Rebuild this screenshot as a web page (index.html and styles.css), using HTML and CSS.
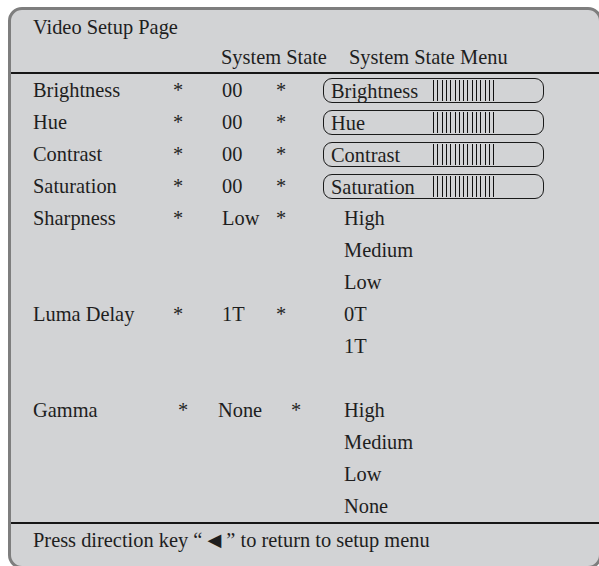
FILE: index.html
```html
<!DOCTYPE html>
<html lang="en">
<head>
    <meta charset="UTF-8">
    <meta name="viewport" content="width=device-width, initial-scale=1.0">
    <title>Video Setup Page</title>
    <link rel="stylesheet" href="styles.css">
</head>
<body>
    <div class="panel">
        <div class="title">Video Setup Page</div>
        <div class="row head">
            <span class="head-state">System State</span>
            <span class="head-menu">System State Menu</span>
        </div>

        <div class="table">
            <div class="row">
                <span class="label">Brightness</span>
                <span class="star">*</span>
                <span class="value">00</span>
                <span class="star">*</span>
                <span class="menu">
                    <span class="slider"><span class="slider-name">Brightness</span><span class="bars"></span></span>
                </span>
            </div>
            <div class="row">
                <span class="label">Hue</span>
                <span class="star">*</span>
                <span class="value">00</span>
                <span class="star">*</span>
                <span class="menu">
                    <span class="slider"><span class="slider-name">Hue</span><span class="bars"></span></span>
                </span>
            </div>
            <div class="row">
                <span class="label">Contrast</span>
                <span class="star">*</span>
                <span class="value">00</span>
                <span class="star">*</span>
                <span class="menu">
                    <span class="slider"><span class="slider-name">Contrast</span><span class="bars"></span></span>
                </span>
            </div>
            <div class="row">
                <span class="label">Saturation</span>
                <span class="star">*</span>
                <span class="value">00</span>
                <span class="star">*</span>
                <span class="menu">
                    <span class="slider"><span class="slider-name">Saturation</span><span class="bars"></span></span>
                </span>
            </div>

            <!-- Sharpness -->
            <div class="row">
                <span class="label">Sharpness</span>
                <span class="star">*</span>
                <span class="value">Low</span>
                <span class="star">*</span>
                <span class="menu option">High</span>
            </div>
            <div class="row"><span class="menu option">Medium</span></div>
            <div class="row"><span class="menu option">Low</span></div>

            <!-- Luma delay -->
            <div class="row">
                <span class="label">Luma Delay</span>
                <span class="star">*</span>
                <span class="value">1T</span>
                <span class="star">*</span>
                <span class="menu option">0T</span>
            </div>
            <div class="row"><span class="menu option">1T</span></div>
            <div class="row"></div>

            <!-- Gamma -->
            <div class="row row-wide">
                <span class="label">Gamma</span>
                <span class="star">*</span>
                <span class="value">None</span>
                <span class="star">*</span>
                <span class="menu option">High</span>
            </div>
            <div class="row"><span class="menu option">Medium</span></div>
            <div class="row"><span class="menu option">Low</span></div>
            <div class="row"><span class="menu option">None</span></div>
        </div>

        <div class="footer">Press direction key &ldquo; <span class="arrow">&#9664;</span> &rdquo; to return to setup menu</div>
    </div>
</body>
</html>
```

FILE: styles.css
```css
html,
body {
    margin: 0;
    padding: 0;
    height: 100%;
    overflow: hidden;
    background-color: #ffffff;
}

body {
    font-family: "Liberation Serif", "Times New Roman", serif;
    font-size: 20.4px;
    color: #1e1e1e;
}

.panel {
    box-sizing: border-box;
    width: 594px;
    height: 562px;
    margin: 7px 0 0 8px;
    padding-top: 2px;
    background-color: #d2d3d5;
    border: 3px solid #7e7e7e;
    border-radius: 14px;
}

.title {
    line-height: 31px;
    padding-left: 22px;
}

.row {
    display: grid;
    grid-template-columns: 130px 30px 73px 30px 1fr;
    height: 32px;
    line-height: 32px;
    padding-left: 22px;
    white-space: nowrap;
}

.head {
    height: 29px;
    line-height: 29px;
}

.head-state {
    grid-column: 3 / 5;
    padding-left: 28px;
}

.head-menu {
    grid-column: 5;
    padding-left: 53px;
}

.table {
    border-top: 2px solid #161616;
    border-bottom: 2px solid #161616;
}

.star {
    text-align: center;
}

.value {
    padding-left: 29px;
}

.row-wide {
    grid-template-columns: 130px 40px 79px 28px 1fr;
}

.row-wide .value {
    padding-left: 15px;
}

.menu {
    grid-column: 5;
    padding-left: 27px;
    display: flex;
    align-items: center;
}

.option {
    padding-left: 48px;
}

.row-wide .option {
    padding-left: 34px;
}

.slider {
    box-sizing: border-box;
    display: flex;
    align-items: center;
    width: 221px;
    height: 25px;
    margin-top: 1px;
    padding-left: 7px;
    border: 1.5px solid #1a1a1a;
    border-radius: 9px;
    line-height: 22px;
}

.slider-name {
    width: 102px;
    flex: none;
}

.bars {
    width: 62px;
    height: 21px;
    background: repeating-linear-gradient(to right, #111 0 1px, transparent 1px 4.3px);
}

.footer {
    padding: 6px 0 0 22px;
    line-height: 20px;
    white-space: nowrap;
}

.arrow {
    font-family: "DejaVu Sans", sans-serif;
    font-size: 18px;
    vertical-align: 1px;
}
```
